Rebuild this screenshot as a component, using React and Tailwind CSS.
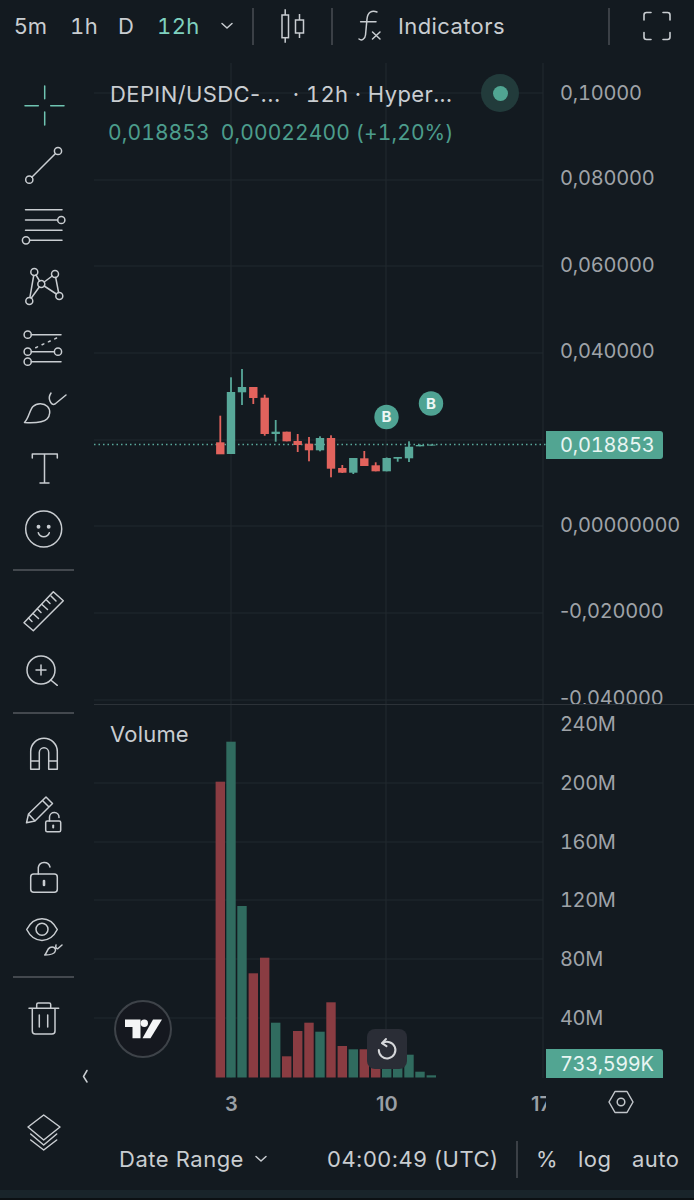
import React from "react";

const candles = [
    { x: 220.3, up: false, top: 442.3, bottom: 454.3, high: 415.7, low: 454 },
    { x: 231, up: true, top: 392, bottom: 454, high: 377.3, low: 454 },
    { x: 242, up: true, top: 387, bottom: 392.3, high: 369, low: 405 },
    { x: 253.3, up: false, top: 387, bottom: 398, high: 387, low: 404 },
    { x: 264.7, up: false, top: 397.7, bottom: 434, high: 394.7, low: 435.7 },
    { x: 275.7, up: true, top: 431.7, bottom: 434, high: 420, low: 441.7 },
    { x: 286.7, up: false, top: 431.7, bottom: 441.3, high: 431.7, low: 441.3 },
    { x: 297.7, up: false, top: 441, bottom: 445, high: 434, low: 452 },
    { x: 309, up: false, top: 443.7, bottom: 450.3, high: 437, low: 461.3 },
    { x: 320, up: true, top: 438, bottom: 450.3, high: 436.3, low: 451.3 },
    { x: 331, up: false, top: 438, bottom: 468.7, high: 435.3, low: 477.3 },
    { x: 342.3, up: false, top: 468, bottom: 472.7, high: 465, low: 473 },
    { x: 353.3, up: true, top: 458, bottom: 472.7, high: 458, low: 474 },
    { x: 364.3, up: false, top: 458.3, bottom: 466, high: 451, low: 466 },
    { x: 375.7, up: false, top: 465.3, bottom: 471.3, high: 462.3, low: 471.3 },
    { x: 386.7, up: true, top: 458, bottom: 471.3, high: 457.5, low: 471.3 },
    { x: 397.7, up: true, top: 457, bottom: 458.7, high: 457, low: 461.7 },
    { x: 409, up: true, top: 446.7, bottom: 458.3, high: 441.3, low: 462 },
    { x: 420, up: true, top: 445, bottom: 446.3, high: 444.5, low: 446.3 },
    { x: 431.3, up: true, top: 444.6, bottom: 445.6, high: 444.6, low: 445.6 },
];

const volumes = [
    { x: 220.3, up: false, top: 781.7 },
    { x: 231, up: true, top: 741.7 },
    { x: 242, up: true, top: 906 },
    { x: 253.3, up: false, top: 973.3 },
    { x: 264.7, up: false, top: 957.7 },
    { x: 275.7, up: true, top: 1022.7 },
    { x: 286.7, up: false, top: 1056.3 },
    { x: 297.7, up: false, top: 1031 },
    { x: 309, up: false, top: 1022.7 },
    { x: 320, up: true, top: 1031.7 },
    { x: 331, up: false, top: 1002.3 },
    { x: 342.3, up: false, top: 1046 },
    { x: 353.3, up: true, top: 1049.3 },
    { x: 364.3, up: false, top: 1049.3 },
    { x: 375.7, up: false, top: 1066 },
    { x: 386.7, up: true, top: 1066 },
    { x: 397.7, up: true, top: 1066 },
    { x: 409, up: true, top: 1054.7 },
    { x: 420, up: true, top: 1071.7 },
    { x: 431.3, up: true, top: 1075.3 },
];

const priceLabels = ["0,080000", "0,060000", "0,040000", "", "0,00000000", "-0,020000", "-0,040000"];
const volumeLabels = ["200M", "160M", "120M", "80M", "40M"];

// Icons are drawn in page coordinates, each cell picks its slice with the viewBox
function Cell({ y, h, children }) {
    return (
        <svg width="94" height={h} viewBox={`0 ${y} 94 ${h}`} fill="none" stroke="#c9cdd1" strokeWidth="1.5" strokeLinecap="round" strokeLinejoin="round" className="shrink-0">
            {children}
        </svg>
    );
}

function Divider() {
    return <div className="ml-[13px] h-[2px] w-[61px] shrink-0 bg-[#43484e]" />;
}

function Toolbar() {
    return (
        <aside className="flex w-[94px] shrink-0 flex-col">
            <Cell y={52} h={83}>
                <path stroke="#6fc4b2" d="M44.7 86v12.7M44.7 112v13M25 105.7h13.3M50.7 105.7H64" />
            </Cell>
            <Cell y={135} h={59}>
                <circle cx="58" cy="151" r="3.6" />
                <circle cx="29.3" cy="179.7" r="3.6" />
                <path d="M55.5 153.5 31.8 177.2" />
            </Cell>
            <Cell y={194} h={59}>
                <path d="M25.5 209.7h36.5M25.5 220h32M25.5 230.3h36.5M30 240.3h32" />
                <circle cx="61.3" cy="220" r="3.6" />
                <circle cx="26" cy="240.3" r="3.6" />
            </Cell>
            <Cell y={253} h={64}>
                <circle cx="34.3" cy="272" r="3.5" />
                <circle cx="55" cy="274" r="3.5" />
                <circle cx="41.3" cy="284" r="3.5" />
                <circle cx="59.3" cy="296" r="3.5" />
                <circle cx="29.3" cy="301" r="3.5" />
                <path d="M29.9 297.5 33.7 275.5M36 275 39.6 281M44.2 282 52.2 276M55.7 277.5 58.6 292.5M44.2 286 56.4 294M39.3 287 31.3 298" />
            </Cell>
            <Cell y={317} h={63}>
                <circle cx="27.7" cy="334.7" r="3.6" />
                <circle cx="27.7" cy="351.7" r="3.6" />
                <circle cx="58" cy="351.7" r="3.6" />
                <circle cx="27.7" cy="361.7" r="3.6" />
                <path d="M31.3 334.7H61M31.3 351.7h23M31.3 361.7H61" />
                <path d="M35.7 347.7 57.3 337.7" strokeDasharray="2 5" />
            </Cell>
            <Cell y={380} h={58}>
                <path d="M24.5 422.5C29 418 29.5 410 33 406.5 37 402.5 44 403 47.5 406.5 51 410 50 416 47 419 43 423 34 423 24.5 422.5Z" />
                <path d="M51 393C49 396 49 399 50 401 51 404 53 405 55 404L66 395" />
            </Cell>
            <Cell y={438} h={60}>
                <path d="M32.3 458v-4h25v4M44.5 454v29M40 483h9" />
            </Cell>
            <Cell y={498} h={62}>
                <circle cx="43.7" cy="529" r="18" />
                <circle cx="38.5" cy="526.7" r="1.2" fill="#c9cdd1" />
                <circle cx="48.7" cy="526.7" r="1.2" fill="#c9cdd1" />
                <path d="M38.3 532.7C40 538 47.5 538 49.3 532.7" />
            </Cell>
            <div className="mt-[9px]">
                <Divider />
            </div>
            <Cell y={571} h={69}>
                <path d="M53.3 591.7 63.3 600.7 33.3 630.7 24 622.7Z" />
                <path d="M28.5 618 32 621.5M33 613.5 38.5 618.5M37.5 609 41 612.5M42 604.5 47.5 609.5M46.5 600 50 603.5M51 596 56 601" />
            </Cell>
            <Cell y={640} h={63}>
                <circle cx="41" cy="670" r="14" />
                <path d="M41 665v10M36 670h10M50.7 680 57.3 685.3" />
            </Cell>
            <div className="mt-[9px]">
                <Divider />
            </div>
            <Cell y={714} h={71}>
                <path d="M30.7 769.3V751.5a13.3 13.3 0 0 1 26.6 0V769.3H48.7V752.5a4.7 4.7 0 0 0-9.4 0V769.3ZM30.7 761h8.6M48.7 761h8.6" />
            </Cell>
            <Cell y={785} h={63}>
                <path d="M26.5 822.8 28.5 814 46 797 52.5 803.5 35 821ZM28.5 814 35 821M42.5 800.5 49 807" />
                <rect x="45.7" y="821" width="15" height="10.7" rx="1.5" />
                <path d="M49.5 821v-4a4.7 4.7 0 0 1 9.5 0.5" />
                <path d="M53.2 825.5v2" strokeWidth="2" />
            </Cell>
            <Cell y={848} h={60}>
                <rect x="30.7" y="874" width="26.6" height="18.3" rx="3" />
                <path d="M38.3 874v-6.5a6 6 0 0 1 11.7-0.5" />
                <path d="M44 881v4" strokeWidth="2.6" />
            </Cell>
            <Cell y={908} h={59}>
                <path d="M26.7 929.5C34 915 50 915 57.3 929.5 50 944 34 944 26.7 929.5Z" />
                <circle cx="42" cy="929.3" r="6" />
                <path d="M44.7 955C47 953 47 949 50 947.5 53 946 56 948 55.5 950.5 55 953.5 50 955 44.7 955Z" />
                <path d="M56 945C55 948 57 949 58 948.5L62 945" />
            </Cell>
            <div className="mt-[9px]">
                <Divider />
            </div>
            <Cell y={979} h={81}>
                <path d="M29 1009.3h29.7M36.7 1009v-3.5a1.5 1.5 0 0 1 1.5-1.5h11a1.5 1.5 0 0 1 1.5 1.5v3.5M32.3 1009.3V1032a3 3 0 0 0 3 3h16.7a3 3 0 0 0 3-3V1009.3M39.3 1016v12M47.7 1016v12" />
            </Cell>
            <Cell y={1060} h={40}>
                <path d="M87 1071.5 83.5 1077.5 87 1083" />
            </Cell>
            <Cell y={1100} h={65}>
                <path d="M28 1128 43.7 1116 60 1128 43.7 1141ZM30.7 1135 43.7 1146 56.7 1135M30.7 1141 43.7 1151 56.7 1141" />
            </Cell>
        </aside>
    );
}

function TopBar() {
    return (
        <header className="flex h-[52px] shrink-0 items-center text-[22px] tracking-[0.4px] text-[#c9cdd1]">
            <span className="ml-[14px] w-[34px]">5m</span>
            <span className="ml-[22px] w-[27px] tabular-nums">1h</span>
            <span className="ml-[21px] w-[16px]">D</span>
            <span className="ml-[23px] w-[40px] text-[#7fd1bf] tabular-nums">12h</span>
            <svg width="14" height="10" viewBox="0 0 14 10" fill="none" stroke="#c9cdd1" strokeWidth="1.5" strokeLinecap="round" strokeLinejoin="round" className="ml-[23px]">
                <path d="M2 2.5 7 7 12 2.5" />
            </svg>
            <div className="ml-[18px] h-[37px] w-[2px] bg-[#3b4046]" />
            <svg width="26" height="36" viewBox="279 8 26 36" fill="none" stroke="#c9cdd1" strokeWidth="1.5" className="ml-[25px]">
                <rect x="282" y="15" width="6.5" height="22.7" />
                <path d="M285.2 9.3V15M285.2 37.7V42.7M299.5 14V20M299.5 33V38" />
                <rect x="295.5" y="20" width="8" height="13" />
            </svg>
            <div className="ml-[26px] h-[37px] w-[2px] bg-[#3b4046]" />
            <svg width="26" height="34" viewBox="357 9 26 34" fill="none" stroke="#c9cdd1" strokeWidth="1.5" strokeLinecap="round" className="ml-[24px]">
                <path d="M377 12C372 10 367.5 12 367 19L365.5 35C365 39.5 361.5 41 359 39M360.6 21.7H376M372.5 32 380 39M380 32 372.5 39" />
            </svg>
            <span className="ml-[15px] w-[107px]">Indicators</span>
            <div className="ml-[103px] h-[37px] w-[2px] bg-[#3b4046]" />
            <svg width="30" height="30" viewBox="642 11 30 30" fill="none" stroke="#c9cdd1" strokeWidth="1.6" strokeLinecap="round" className="ml-[32px]">
                <path d="M644 20V15a2.5 2.5 0 0 1 2.5-2.5H651M663 12.5h4.5a2.5 2.5 0 0 1 2.5 2.5v5M670 32.5V37a2.5 2.5 0 0 1-2.5 2.5H663M651 39.5h-4.5A2.5 2.5 0 0 1 644 37v-4.5" />
            </svg>
        </header>
    );
}

function PriceLabel({ label }) {
    if (!label.startsWith("-")) return label;
    return (
        <>
            <span className="normal-nums">-</span>
            {label.slice(1)}
        </>
    );
}

function PricePane() {
    return (
        <div className="flex h-[652px] shrink-0">
            <div className="relative h-full w-[452px] shrink-0 overflow-hidden">
                <svg width="452" height="652" viewBox="94 52 452 652" className="block">
                    <g stroke="#20282e" strokeWidth="1.2">
                        {[93, 180, 266, 353, 440, 526, 613, 700].map((y) => (
                            <line key={y} x1="94" x2="543" y1={y} y2={y} />
                        ))}
                        {[231, 386, 543].map((x) => (
                            <line key={x} x1={x} x2={x} y1="63" y2="704" />
                        ))}
                    </g>
                    <line x1="94" x2="546" y1="444.5" y2="444.5" stroke="#5aa99b" strokeWidth="1.3" strokeDasharray="1.5 3" />
                    {candles.map((c) => (
                        <g key={c.x} fill={c.up ? "#58a899" : "#e2635d"}>
                            <rect x={c.x - 0.9} y={c.high} width="1.8" height={c.low - c.high} />
                            <rect x={c.x - 4.2} y={c.top} width="8.4" height={c.bottom - c.top} />
                        </g>
                    ))}
                    {[[386.5, 417], [431, 403.5]].map(([x, y]) => (
                        <g key={x}>
                            <circle cx={x} cy={y} r="12.2" fill="#4fa393" />
                            <text x={x} y={y + 5.2} textAnchor="middle" fontSize="15" fontWeight="700" fill="#eef7f5">
                                B
                            </text>
                        </g>
                    ))}
                </svg>
                <div className="absolute left-[16px] top-[26px] flex items-center text-[22px] tracking-[0.4px] text-[#c9cdd1]">
                    <span>DEPIN/USDC-...</span>
                    <span className="ml-[12px] tabular-nums">· 12h · Hyper...</span>
                </div>
                <div className="absolute left-[14px] top-[65px] flex text-[21px] tracking-[0.1px] text-[#4c9d8c] tabular-nums">
                    <span>0,018853</span>
                    <span className="ml-[11px]">0,00022400 (+1,20%)</span>
                </div>
                <div className="absolute left-[387px] top-[22px] flex h-[38px] w-[38px] items-center justify-center rounded-full bg-[#223b3b]">
                    <div className="h-[15px] w-[15px] rounded-full bg-[#50a592]" />
                </div>
            </div>
            <div className="relative flex-1 overflow-hidden pl-[14px] text-[20px] tracking-[-0.2px] text-[#9fa3a8] tabular-nums">
                <div className="mb-[2px] flex h-[81px] items-center">0,10000</div>
                {priceLabels.map((label, i) => (
                    <div key={i} className="flex h-[86.6px] items-center">
                        <span>
                            <PriceLabel label={label} />
                        </span>
                    </div>
                ))}
                <div className="absolute left-0 top-[379px] flex h-[28px] w-[117px] items-center rounded-r-[3px] bg-[#52a592] pl-[14px] text-[#e8f5f2]">0,018853</div>
            </div>
        </div>
    );
}

function VolumePane() {
    return (
        <div className="flex h-[373px] shrink-0">
            <div className="relative h-full w-[452px] shrink-0 overflow-hidden">
                <svg width="452" height="373" viewBox="94 705 452 373" className="block">
                    <g stroke="#20282e" strokeWidth="1.2">
                        {[783, 842, 900, 959, 1018].map((y) => (
                            <line key={y} x1="94" x2="543" y1={y} y2={y} />
                        ))}
                        {[231, 386, 543].map((x) => (
                            <line key={x} x1={x} x2={x} y1="705" y2="1078" />
                        ))}
                    </g>
                    {volumes.map((v) => (
                        <rect key={v.x} x={v.x - 4.7} y={v.top} width="9.4" height={1077.5 - v.top} fill={v.up ? "#306b5f" : "#8a3c42"} />
                    ))}
                </svg>
                <span className="absolute left-[16px] top-[13px] text-[22px] tracking-[0.2px] text-[#c9cdd1]">Volume</span>
                <div className="absolute left-[20px] top-[295px] flex h-[58px] w-[58px] items-center justify-center rounded-full border-2 border-[#3e4349] bg-[#15181f]">
                    <svg width="38" height="20" viewBox="123 1020 38 20" fill="#f4f5f6">
                        <path d="M124 1020.5h15.5v18.8h-8V1028H124Z" />
                        <circle cx="143.3" cy="1024.2" r="3.7" />
                        <path d="M152 1020.5h9l-11.5 18.8h-8Z" />
                    </svg>
                </div>
                <div className="absolute left-[273px] top-[324px] flex h-[40px] w-[40px] items-center justify-center rounded-lg bg-[#2a2d36]">
                    <svg width="24" height="24" viewBox="0 0 24 24" fill="none" stroke="#d5d7da" strokeWidth="2" strokeLinecap="round" strokeLinejoin="round">
                        <path d="M7.5 6.2A8.3 8.3 0 1 1 3.8 13" />
                        <path d="M11 2 7 6.2l4.5 3" />
                    </svg>
                </div>
            </div>
            <div className="relative flex-1 pl-[14px] text-[20px] tracking-[-0.4px] text-[#9fa3a8] tabular-nums">
                <div className="mb-[11px] flex h-[38px] items-center">240M</div>
                {volumeLabels.map((label) => (
                    <div key={label} className="flex h-[58.6px] items-center">
                        {label}
                    </div>
                ))}
                <div className="absolute left-0 top-[344px] flex h-[29px] w-[117px] items-center rounded-tr-[3px] bg-[#52a592] pl-[14px] text-[#e8f5f2]">733,599K</div>
            </div>
        </div>
    );
}

function TimeAxis() {
    return (
        <div className="flex h-[47px] shrink-0 items-center text-[20px] font-semibold text-[#9a9fa5]">
            <div className="relative h-full w-[452px] shrink-0 overflow-hidden">
                <span className="absolute left-[131px] top-[11px]">3</span>
                <span className="absolute left-[282px] top-[11px]">10</span>
                <span className="absolute left-[437px] top-[11px]">17</span>
            </div>
            <svg width="28" height="26" viewBox="0 0 28 26" fill="none" stroke="#c2c6ca" strokeWidth="1.5" strokeLinejoin="round" className="ml-[61px]">
                <path d="M8 2.5h12L26 13l-6 10.5H8L2 13Z" />
                <circle cx="14" cy="13" r="3.8" />
            </svg>
        </div>
    );
}

function BottomBar() {
    return (
        <div className="flex h-[65px] items-center pt-[3px] text-[22px] tracking-[0.5px] text-[#c9cdd1]">
            <span className="ml-[25px] w-[126px]">Date Range</span>
            <svg width="14" height="10" viewBox="0 0 14 10" fill="none" stroke="#c9cdd1" strokeWidth="1.5" strokeLinecap="round" strokeLinejoin="round" className="ml-[9px]">
                <path d="M2 2.5 7 7 12 2.5" />
            </svg>
            <span className="ml-[59px] w-[172px]">04:00:49 (UTC)</span>
            <div className="ml-[17px] h-[37px] w-[2px] bg-[#3b4046]" />
            <span className="ml-[18px] w-[21px]">%</span>
            <span className="ml-[21px] w-[33px]">log</span>
            <span className="ml-[21px]">auto</span>
        </div>
    );
}

export default function App() {
    return (
        <div className="flex h-[1200px] w-[694px] flex-col overflow-hidden bg-[#131a20] font-[Inter,sans-serif]">
            <TopBar />
            <div className="flex h-[1138px] shrink-0">
                <Toolbar />
                <main className="flex w-[600px] flex-col">
                    <PricePane />
                    <div className="h-[1px] shrink-0 bg-[#2c3238]" />
                    <VolumePane />
                    <TimeAxis />
                    <BottomBar />
                </main>
            </div>
            <div className="h-[8px] shrink-0 bg-[#19242a]" />
            <div className="h-[2px] shrink-0 bg-[#0c1013]" />
        </div>
    );
}
